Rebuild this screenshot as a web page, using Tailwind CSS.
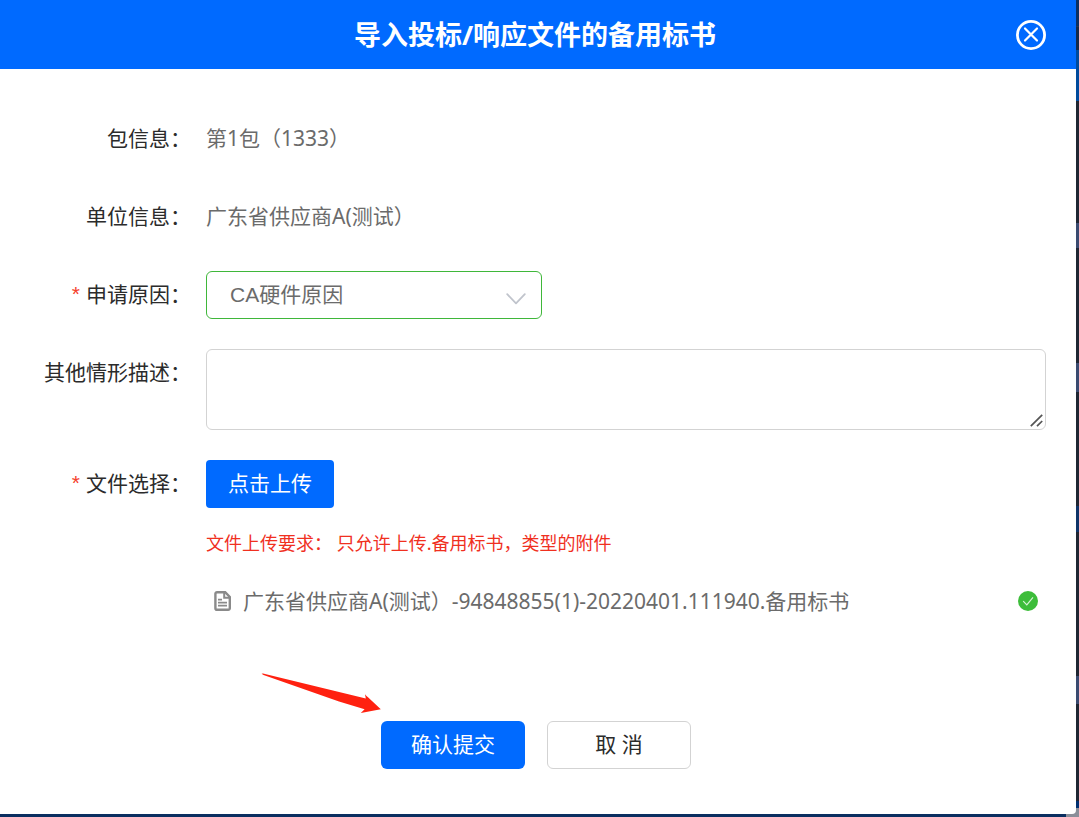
<!DOCTYPE html>
<html lang="zh-CN">
<head>
    <meta charset="UTF-8">
    <meta name="viewport" content="width=device-width, initial-scale=1.0">
    <title>导入投标/响应文件的备用标书</title>

    <script src="https://cdn.jsdelivr.net/npm/@tailwindcss/browser@4"></script>

    <style>
        body {
            font-family: 'Noto Sans', 'Noto Sans CJK SC', sans-serif;
            /* dimmed page behind the dialog */
            background:
                linear-gradient(#0a2e60, #0a2e60) left bottom / calc(100% - 13px) 3px no-repeat,
                linear-gradient(#0b2f63 0 26px, #253450 26px 27px, #14294a 27px 50px, #004a9c 50px 101px, #1f2633 101px 223px, #3a4a70 223px 248px, #1f2633 248px 363px, #3a4a70 363px 392px, #1f2633 392px 506px, #0f3468 506px 532px, #1f2633 532px 676px, #3a4a70 676px 704px, #1f2633 704px 801px, #003070 801px 808px, #8a8e99 808px);
        }
    </style>
</head>
<body class="flex min-h-screen flex-col">

    <div role="dialog" aria-labelledby="dialogTitle" class="mr-[3px] mb-[3px] flex grow flex-col rounded-br-sm bg-white text-[21px] leading-8 text-[#6b6b6b]">

        <!-- Header -->
        <div class="flex h-[69px] items-center bg-[#006aff] pr-[30px] pl-[54px] text-white">
            <h1 id="dialogTitle" class="grow text-center text-[27px] font-bold">导入投标/响应文件的备用标书</h1>
            <button type="button" aria-label="关闭" class="size-[30px]">
                <svg class="size-[30px]" viewBox="0 0 30 30" fill="none" stroke="currentColor" stroke-linecap="round">
                    <circle cx="15" cy="15" r="13.6" stroke-width="2.8"/>
                    <path d="M9 8.5l12 12M21 8.5l-12 12" stroke-width="2.2"/>
                </svg>
            </button>
        </div>

        <form class="pt-[46px] pr-[30px] pb-[45px]">
            <!-- Fields -->
            <div class="grid grid-cols-[191px_1fr] gap-x-[15px] gap-y-[30px]">
                <div class="flex h-12 items-center justify-end pb-0.5 text-[#2b2b2b]">包信息：</div>
                <div class="flex h-12 items-center pb-0.5">第1包（1333）</div>

                <div class="flex h-12 items-center justify-end pb-0.5 text-[#2b2b2b]">单位信息：</div>
                <div class="flex h-12 items-center pb-0.5">广东省供应商A(测试）</div>

                <label for="reason" class="flex h-12 items-center justify-end gap-[6px] pb-0.5 text-[#2b2b2b]"><span class="font-['Liberation_Sans'] text-[#f5402c]">*</span>申请原因：</label>
                <div class="relative w-[336px]">
                    <select id="reason" required class="h-12 w-full appearance-none rounded-md border border-[#3fb73a] bg-white pr-12 pl-[23px] font-['Liberation_Sans','Noto_Sans_CJK_SC',sans-serif] outline-none">
                        <option>CA硬件原因</option>
                    </select>
                    <svg class="pointer-events-none absolute top-[22px] right-4 h-3 w-5" viewBox="0 0 20 12" fill="none" stroke="#c0c4cc" stroke-width="1.8" stroke-linecap="round" stroke-linejoin="round">
                        <path d="M1.2 1.2L10 10.4L18.8 1.2"/>
                    </svg>
                </div>

                <label for="desc" class="flex h-12 items-center justify-end pb-0.5 text-[#2b2b2b]">其他情形描述：</label>
                <div class="relative">
                    <textarea id="desc" class="block h-[81px] w-full resize-none rounded-md border border-[#d3d3d3] bg-white px-5 py-2 outline-none"></textarea>
                    <svg class="pointer-events-none absolute right-[3px] bottom-[3px] h-[13px] w-[13px]" viewBox="0 0 13 13" fill="none" stroke="#555" stroke-width="1.7">
                        <path d="M.8 12.2L12.2 .8M7 12.2l5.2-5.2"/>
                    </svg>
                </div>

                <label for="uploadBtn" class="flex h-12 items-center justify-end gap-[6px] pb-0.5 text-[#2b2b2b]"><span class="font-['Liberation_Sans'] text-[#f5402c]">*</span>文件选择：</label>
                <div>
                    <button type="button" id="uploadBtn" class="h-12 rounded-sm bg-[#006aff] px-[22px] pb-0.5 text-white">点击上传</button>
                    <p class="mt-[19px] whitespace-pre text-[18px] text-[#f0301f]">文件上传要求： 只允许上传.备用标书，类型的附件</p>

                    <!-- Uploaded file -->
                    <div class="mt-[26px] flex items-center gap-3 px-2">
                        <svg class="h-5 w-[17px]" viewBox="0 0 17 20" fill="none" stroke="#8a8a8a" stroke-width="2.4">
                            <path d="M3 1.2h8.2l4.6 4.8v11.2a1.6 1.6 0 0 1-1.6 1.6H3a1.6 1.6 0 0 1-1.6-1.6V2.8A1.6 1.6 0 0 1 3 1.2z"/>
                            <path d="M10.2 1.5v5.3h5.4" stroke-width="2"/>
                            <path d="M4 8.6h4M4 11.6h9M4 14.6h9" stroke-width="1.8"/>
                        </svg>
                        <span class="grow">广东省供应商A(测试）-94848855(1)-20220401.111940.备用标书</span>
                        <svg class="size-5" viewBox="0 0 20 20" fill="none">
                            <circle cx="10" cy="10" r="10" fill="#3dbd3a"/>
                            <path d="M5.2 10.2l3.6 3.6 6.2-7.4" stroke="#d8f2d7" stroke-width="1.2"/>
                        </svg>
                    </div>
                </div>
            </div>

            <!-- Actions -->
            <div class="mt-[104px] ml-[26px] flex justify-center gap-[22px]">
                <div class="relative">
                    <button type="submit" class="h-12 w-36 rounded-md bg-[#006aff] pb-0.5 text-white">确认提交</button>
                    <svg class="pointer-events-none absolute right-full bottom-full mb-[6px] h-[42px] w-[120px]" viewBox="0 0 120 42" fill="#ff2110">
                        <path d="M.6 .8L2 .6L104.8 25.4L104 21.2Q105.5 23 107 24.2L119.8 36.2L99.8 40L103.6 36.2L78 28.5L2.5 2Z"/>
                    </svg>
                </div>
                <button type="button" class="h-12 w-36 rounded-md border border-[#d3d3d3] bg-white pb-0.5 text-[#2b2b2b]">取 消</button>
            </div>
        </form>
    </div>

</body>
</html>
